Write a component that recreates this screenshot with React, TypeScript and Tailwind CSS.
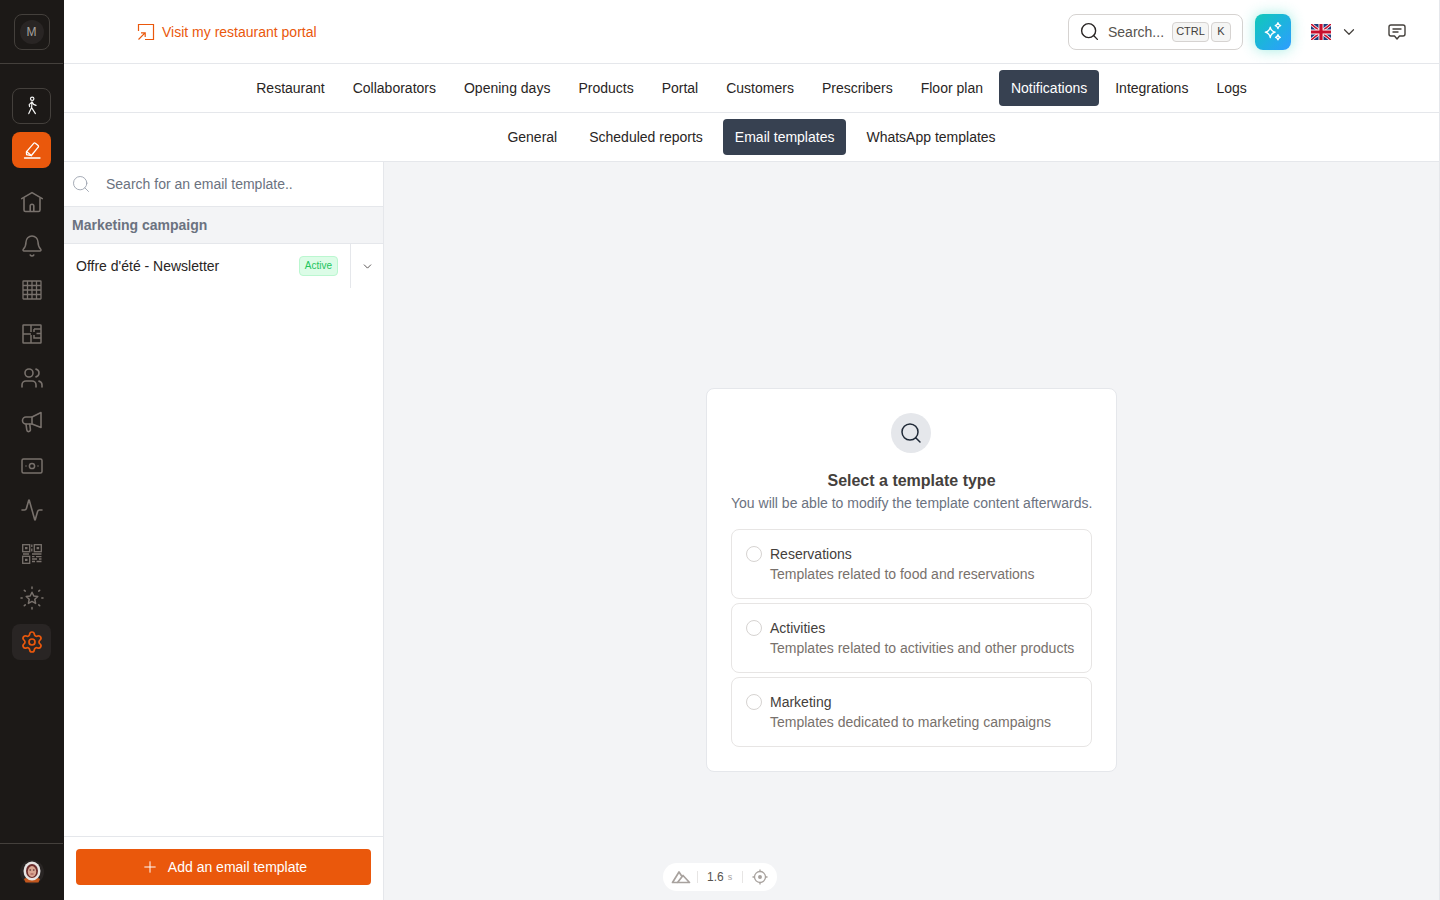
import React from "react";
import { Bell, Users, Activity, Settings, Search, ChevronDown, Plus } from "lucide-react";

const stroke = "#78716c";

function Walker() {
  return (
    <svg width="16" height="20" viewBox="0 0 16 20" fill="none" stroke="#f5f5f4" strokeWidth="1.200" strokeLinecap="round" strokeLinejoin="round">
      <circle cx="8.200" cy="2.800" r="1.700" />
      <path d="M8 5.800 5.200 8.600 5.600 10.600M8 5.800 7.600 11.600M8 5.800 9.600 8.400 12 9.400M7.600 11.600 4.800 17.600M7.600 11.600 11.400 17.600" />
    </svg>
  );
}
function Pencil() {
  return (
    <svg width="20" height="20" viewBox="0 0 20 20" fill="none" stroke="#fff" strokeWidth="1.300" strokeLinecap="round" strokeLinejoin="round">
      <path d="M5.800 14.800 4.600 14.700 4.400 11.800 11.700 3.300a1.200 1.200 0 0 1 1.700-.1l2.700 2.300a1.200 1.200 0 0 1 .1 1.700L9.400 15.500Z" />
      <path d="m4.600 11.500 4.800 4" />
      <path d="M2.500 18h15.500" />
    </svg>
  );
}
function House() {
  return (
    <svg width="24" height="24" viewBox="0 0 24 24" fill="none" stroke={stroke} strokeWidth="1.600" strokeLinecap="round" strokeLinejoin="round">
      <path d="M1.700 8.600 12 2.600l10.300 6" />
      <path d="M4 8.400v11.600a1.500 1.500 0 0 0 1.500 1.500h13a1.500 1.500 0 0 0 1.500-1.500V8.400" />
      <path d="M10.200 21v-5a1.800 1.800 0 0 1 3.600 0v5" />
    </svg>
  );
}
function Grid() {
  return (
    <svg width="20" height="20" viewBox="0 0 20 20" fill="none" stroke={stroke} strokeWidth="1.300">
      <rect x="1" y="1" width="18" height="18" rx=".5" />
      <path d="M1 5.500h18M1 10h18M1 14.500h18M5.500 1v18M10 1v18M14.500 1v18" />
    </svg>
  );
}
function FloorPlan() {
  return (
    <svg width="20" height="20" viewBox="0 0 20 20" fill="none" stroke={stroke} strokeWidth="1.500">
      <rect x="1" y="1" width="18" height="18" rx=".5" />
      <path d="M9 1v7M9 11v8M1 10h8M12 5h7M12 5v3M12 11v3h7M14.500 9.500H19" />
    </svg>
  );
}
function Horn() {
  return (
    <svg width="22" height="22" viewBox="0 0 22 22" fill="none" stroke={stroke} strokeWidth="1.600" strokeLinecap="round" strokeLinejoin="round">
      <path d="M11 6 20 1.500v15L11 13H5a3.500 3.500 0 0 1 0-7h6Z" />
      <path d="M11 6v7" />
      <path d="M5 13.200 5.800 19a1.800 1.800 0 0 0 3.600-.5L8.800 13.400" />
    </svg>
  );
}
function Cash() {
  return (
    <svg width="22" height="16" viewBox="0 0 22 16" fill="none" stroke={stroke} strokeWidth="1.500" strokeLinecap="round">
      <rect x="1" y="1" width="20" height="14" rx="1.500" />
      <circle cx="11" cy="8" r="2.600" />
      <path d="M5 8h.01M17 8h.01" />
    </svg>
  );
}
function Qr() {
  return (
    <svg width="20" height="20" viewBox="0 0 20 20" fill="none" stroke={stroke} strokeWidth="1.300">
      <rect x=".7" y=".7" width="7" height="7" />
      <rect x="12.300" y=".7" width="7" height="7" />
      <rect x=".7" y="12.300" width="7" height="7" />
      <path d="M3 4.200h2.500M14.600 4.200h2.500M3 15.800h2.500" strokeWidth="2.200" />
      <path d="M9.800 .5v2.500M9.800 4.500v3M10 10h9.500M10 12.600h2.500M14 12.600h5.500M10 15h5M17 15h2.500M10 17.500h3M14.500 17.500h5M1 10h6" />
    </svg>
  );
}
function StarSpark() {
  return (
    <svg width="24" height="24" viewBox="0 0 24 24" fill="none" stroke={stroke} strokeWidth="1.500" strokeLinecap="round" strokeLinejoin="round">
      <path d="m12 6.200 1.800 3.800 4 .5-3 2.800.8 4.100-3.600-2-3.600 2 .8-4.100-3-2.800 4-.5L12 6.200Z" />
      <path d="M12 1v1.400M12 21.600V23M1 12h1.200M21.800 12H23M4.300 4.300l1 .8M19.700 4.300l-1 .8M4.300 19.700l1-.8M19.700 19.700l-1-.8" />
    </svg>
  );
}
function Portal() {
  return (
    <svg width="18" height="18" viewBox="0 0 18 18" fill="none" stroke="#ea580c" strokeWidth="1.200">
      <path d="M1.500 8V1.500h15v15H8" />
      <path d="M1.500 16.500 7.800 10.200M4 9.800h4.200V14" />
    </svg>
  );
}
function Sparks() {
  return (
    <svg width="22" height="22" viewBox="0 0 20 20" fill="none" stroke="#fff" strokeWidth="1.200" strokeLinejoin="round">
      <path d="M7.500 5.500c.6 3 1.600 4 4.500 4.700-2.900.7-3.900 1.700-4.500 4.800-.6-3.100-1.600-4.100-4.500-4.800 2.900-.7 3.900-1.700 4.500-4.700Z" />
      <path d="M14.500 1.500c.3 1.700.9 2.300 2.500 2.700-1.600.4-2.200 1-2.500 2.700-.3-1.700-.9-2.300-2.500-2.700 1.600-.4 2.200-1 2.500-2.700Z" />
      <path d="M14.500 12.500c.3 1.500.8 2 2.200 2.300-1.400.3-1.900.8-2.200 2.300-.3-1.500-.8-2-2.200-2.300 1.400-.3 1.900-.8 2.200-2.300Z" />
    </svg>
  );
}
function Flag() {
  return (
    <svg width="20" height="16" viewBox="0 0 20 16">
      <rect width="20" height="16" fill="#1f3a7a" />
      <path d="M0 0 20 16M20 0 0 16" stroke="#fff" strokeWidth="3" />
      <path d="M0 0 20 16M20 0 0 16" stroke="#c8102e" strokeWidth="1.600" />
      <path d="M10 0v16M0 8h20" stroke="#fff" strokeWidth="5" />
      <path d="M10 0v16M0 8h20" stroke="#c8102e" strokeWidth="3.200" />
    </svg>
  );
}
function Chat() {
  return (
    <svg width="20" height="20" viewBox="0 0 20 20" fill="none" stroke="#44403c" strokeWidth="1.400" strokeLinecap="round" strokeLinejoin="round">
      <path d="M4 3h12a2 2 0 0 1 2 2v7a2 2 0 0 1-2 2h-3.500L10 17l-2.500-3H4a2 2 0 0 1-2-2V5a2 2 0 0 1 2-2Z" />
      <path d="M6 7h8M6 10h5" />
    </svg>
  );
}
function Avatar() {
  return (
    <svg width="24" height="24" viewBox="0 0 24 24">
      <circle cx="12" cy="12" r="12" fill="#292524" />
      <path d="M4 19c2-2 14-2 16 0l-1.500 3.500h-13Z" fill="#c2561d" />
      <ellipse cx="12" cy="11" rx="8.500" ry="9.500" fill="#e7e5e4" />
      <ellipse cx="12" cy="11" rx="6" ry="7" fill="#6b2c2c" />
      <ellipse cx="12" cy="11.500" rx="4.200" ry="5.400" fill="#d9a591" />
      <path d="M9.500 10h1.600M12.900 10h1.600" stroke="#3f1d1d" strokeWidth="1" />
      <path d="M10.500 14h3" stroke="#8f3a3a" strokeWidth=".8" />
    </svg>
  );
}
function Nuxt() {
  return (
    <svg width="20" height="14" viewBox="0 0 20 14" fill="none" stroke="#a8a29e" strokeWidth="1.700" strokeLinejoin="round">
      <path d="M6.500 12.500H1.500L8 2l3 4.500" />
      <path d="M6.500 12.500 12 5.500l6.500 7H6.500Z" />
    </svg>
  );
}
function Target() {
  return (
    <svg width="16" height="16" viewBox="0 0 16 16" fill="none" stroke="#a8a29e" strokeWidth="1.300">
      <circle cx="8" cy="8" r="5.500" />
      <circle cx="8" cy="8" r="1.300" fill="#a8a29e" />
      <path d="M8 .5v2M8 13.500v2M.5 8h2M13.500 8h2" />
    </svg>
  );
}

const iconClass = "w-[39px] h-9 flex items-center justify-center";

function Sidebar() {
  return (
    <aside className="w-16 h-full shrink-0 flex flex-col bg-[#1c1917] border-r border-[#1c1917]">
      <div className="h-16 shrink-0 flex items-center justify-center border-b border-[#44403c]">
        <div className="w-9 h-9 rounded-lg border border-[#44403c] flex items-center justify-center">
          <div className="w-6 h-6 rounded-full bg-[#292524] flex items-center justify-center text-xs text-[#a8a29e]">M</div>
        </div>
      </div>
      <nav className="flex-1 flex flex-col items-center gap-2 pt-6">
        <div className={`${iconClass} rounded-lg border border-[#44403c]`}><Walker /></div>
        <div className={`${iconClass} rounded-lg bg-[#ea580c]`}><Pencil /></div>
        <div className={`${iconClass} mt-2`}><House /></div>
        <div className={iconClass}><Bell size={24} strokeWidth={1.500} color={stroke} /></div>
        <div className={iconClass}><Grid /></div>
        <div className={iconClass}><FloorPlan /></div>
        <div className={iconClass}><Users size={24} strokeWidth={1.600} color={stroke} /></div>
        <div className={iconClass}><Horn /></div>
        <div className={iconClass}><Cash /></div>
        <div className={iconClass}><Activity size={24} strokeWidth={1.600} color={stroke} /></div>
        <div className={iconClass}><Qr /></div>
        <div className={iconClass}><StarSpark /></div>
        <div className={`${iconClass} rounded-lg bg-[#292524]`}><Settings size={24} strokeWidth={1.700} color="#ea580c" /></div>
      </nav>
      <div className="h-[57px] shrink-0 flex items-center justify-center border-t border-[#44403c]"><Avatar /></div>
    </aside>
  );
}

function Kbd({ children, cls }: { children: React.ReactNode; cls: string }) {
  return (
    <span className={`h-5 flex items-center justify-center rounded border border-[#d6d3d1] bg-[#f5f5f4] text-[11px] text-[#44403c] ${cls}`}>{children}</span>
  );
}

function TopBar() {
  return (
    <header className="h-16 shrink-0 flex items-center border-b border-[#e5e7eb] pl-[73px] pr-[32px]">
      <a className="flex items-center gap-[7px] text-sm text-[#ea580c]"><Portal /><span>Visit my restaurant portal</span></a>
      <div className="ml-auto flex items-center">
        <div className="w-[175px] h-9 pl-[10px] flex items-center rounded-lg border border-[#d6d3d1]">
          <Search size={21} strokeWidth={1.600} color="#292524" />
          <span className="ml-2 text-sm text-[#57534e]">Search...</span>
          <span className="ml-2 flex gap-[2px]"><Kbd cls="w-[37px]">CTRL</Kbd><Kbd cls="w-5">K</Kbd></span>
        </div>
        <div className="ml-3 w-9 h-9 rounded-lg flex items-center justify-center bg-gradient-to-br from-[#14c8b8] to-[#2f9bff] shadow-[0_0_14px_rgba(45,212,191,0.45)]"><Sparks /></div>
        <div className="ml-5 flex items-center gap-[9px]"><Flag /><ChevronDown size={18} strokeWidth={1.600} color="#44403c" /></div>
        <div className="ml-[29px]"><Chat /></div>
      </div>
    </header>
  );
}

function Tabs({ items, active, cls }: { items: string[]; active: string; cls: string }) {
  return (
    <div className={`h-[49px] shrink-0 flex items-center justify-center border-b border-[#e5e7eb] ${cls}`}>
      {items.map((t) => (
        <span key={t} className={`h-9 px-3 flex items-center rounded text-sm ${t === active ? "bg-[#374151] text-white" : "text-[#292524]"}`}>{t}</span>
      ))}
    </div>
  );
}

function Option({ title, desc }: { title: string; desc: string }) {
  return (
    <div className="h-[70px] px-[14px] flex items-start rounded-lg border border-[#e7e5e4] bg-white pt-[14px]">
      <span className="w-4 h-4 mt-[2px] rounded-full border border-[#d6d3d1] shrink-0" />
      <div className="ml-2 text-sm leading-5">
        <div className="text-[#44403c]">{title}</div>
        <div className="text-[#78716c]">{desc}</div>
      </div>
    </div>
  );
}

function LeftPanel() {
  return (
    <section className="w-[320px] shrink-0 h-full flex flex-col border-r border-[#e5e7eb] bg-white">
      <div className="h-[45px] shrink-0 flex items-center pl-[7px] border-b border-[#e5e7eb]">
        <Search size={20} strokeWidth={1.100} color="#9ca3af" />
        <span className="ml-[15px] text-sm text-[#6b7280]">Search for an email template..</span>
      </div>
      <div className="h-[37px] shrink-0 flex items-center px-2 bg-[#f3f4f6] border-b border-[#e5e7eb] text-sm font-semibold text-[#6b7280]">Marketing campaign</div>
      <div className="h-[44px] shrink-0 flex items-center pl-3">
        <span className="text-sm text-[#292524]">Offre d'été - Newsletter</span>
        <span className="ml-auto h-5 px-[5px] pb-px flex items-center rounded border border-[#bbf7d0] bg-[#dcfce7] text-[10px] text-[#22c55e]">Active</span>
        <div className="ml-3 w-[33px] h-full flex items-center justify-center border-l border-[#e5e7eb]">
          <ChevronDown size={13} strokeWidth={1.400} color="#292524" />
        </div>
      </div>
      <div className="flex-1" />
      <div className="h-[64px] shrink-0 px-3 pt-3 border-t border-[#e5e7eb]">
        <button className="w-full h-9 rounded flex items-center justify-center gap-2 bg-[#ea580c] text-sm text-white">
          <span className="w-5 flex justify-center"><Plus size={18} strokeWidth={1.300} /></span><span>Add an email template</span>
        </button>
      </div>
    </section>
  );
}

function Card() {
  return (
    <div className="w-[411px] px-6 pt-6 pb-6 rounded-lg border border-[#e5e7eb] bg-white flex flex-col">
      <div className="self-center -ml-px w-10 h-10 rounded-full bg-[#e5e7eb] flex items-center justify-center">
        <Search size={24} strokeWidth={1.500} color="#1f2937" />
      </div>
      <h2 className="mt-4 text-center text-base leading-6 font-semibold text-[#44403c]">Select a template type</h2>
      <p className="text-center text-sm leading-5 text-[#6b7280] whitespace-nowrap">You will be able to modify the template content afterwards.</p>
      <div className="mt-4 flex flex-col gap-1">
        <Option title="Reservations" desc="Templates related to food and reservations" />
        <Option title="Activities" desc="Templates related to activities and other products" />
        <Option title="Marketing" desc="Templates dedicated to marketing campaigns" />
      </div>
    </div>
  );
}

function DevPill() {
  return (
    <div className="absolute left-[279px] bottom-[9px] h-7 w-[114px] rounded-full bg-white flex items-center pl-2 text-xs text-[#57534e]">
      <Nuxt />
      <span className="ml-[6px] w-px h-3 bg-[#e7e5e4]" />
      <span className="ml-[9px]">1.6</span>
      <span className="ml-1 text-[9px] text-[#a8a29e]">s</span>
      <span className="ml-[10px] w-px h-3 bg-[#e7e5e4]" />
      <span className="ml-[9px]"><Target /></span>
    </div>
  );
}

export default function App() {
  return (
    <div className="w-[1440px] h-[900px] overflow-hidden flex bg-white font-['Liberation_Sans',Arial,sans-serif]">
      <Sidebar />
      <main className="flex-1 min-w-0 h-full flex flex-col border-r border-[#e5e7eb]">
        <TopBar />
        <Tabs cls="gap-1" active="Notifications" items={["Restaurant","Collaborators","Opening days","Products","Portal","Customers","Prescribers","Floor plan","Notifications","Integrations","Logs"]} />
        <Tabs cls="gap-2" active="Email templates" items={["General","Scheduled reports","Email templates","WhatsApp templates"]} />
        <div className="flex-1 min-h-0 flex">
          <LeftPanel />
          <div className="relative flex-1 bg-[#f3f4f6] flex items-center justify-center pt-[98px]">
            <Card />
            <DevPill />
          </div>
        </div>
      </main>
    </div>
  );
}
